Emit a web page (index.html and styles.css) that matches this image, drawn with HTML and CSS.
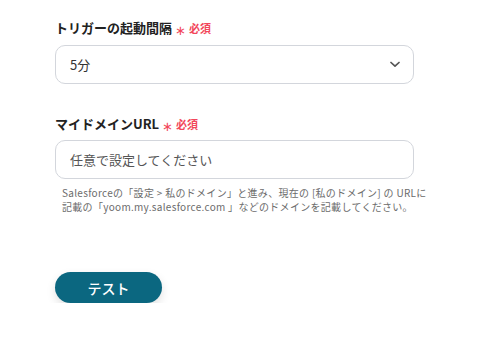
FILE: index.html
```html
<!DOCTYPE html>
<html lang="ja">
<head>
<meta charset="utf-8">
<link rel="stylesheet" href="styles.css">
</head>
<body>
<main class="form">
  <div class="field">
    <div class="label">トリガーの起動間隔<span class="req"><span class="ast">∗</span>必須</span></div>
    <div class="select">
      <span class="value">5分</span>
      <svg class="chev" width="10" height="7" viewBox="0 0 10 7"><path d="M1 1.5 L5 5.2 L9 1.5" fill="none" stroke="#555" stroke-width="1.7" stroke-linecap="round" stroke-linejoin="round"/></svg>
    </div>
  </div>
  <div class="field field2">
    <div class="label">マイドメインURL<span class="req"><span class="ast">∗</span>必須</span></div>
    <div class="input"><span class="placeholder">任意で設定してください</span></div>
    <p class="help">Salesforceの「設定 &gt; 私のドメイン」と進み、現在の [私のドメイン] の URLに<br>記載の「yoom.my.salesforce.com 」などのドメインを記載してください。</p>
  </div>
  <div class="actions">
    <button class="btn">テスト</button>
  </div>
</main>
</body>
</html>
```
FILE: styles.css
```css
html, body {
  margin: 0;
  padding: 0;
  background: #fff;
}
body {
  font-family: "Noto Sans CJK JP", "Noto Sans", sans-serif;
  color: #222;
}
.form {
  width: 359px;
  margin-left: 55px;
  padding-top: 18px;
}
.label {
  font-size: 13px;
  font-weight: 700;
  line-height: 20px;
  color: #222;
  display: flex;
  align-items: center;
}
.req {
  color: #f2485b;
  font-size: 11px;
  font-weight: 700;
  margin-left: 3px;
  display: flex;
  align-items: center;
}
.ast {
  font-size: 13px;
  font-weight: 400;
  margin-right: 3px;
  line-height: 1;
  position: relative;
  top: 1px;
}
.select, .input {
  box-sizing: border-box;
  height: 39px;
  border: 1px solid #d3d6dc;
  border-radius: 10px;
  margin-top: 7px;
  display: flex;
  align-items: center;
  padding: 0 13px 0 14px;
  font-size: 13px;
}
.select {
  justify-content: space-between;
}
.value { color: #333; }
.field2 { margin-top: 30px; }
.input { margin-top: 6px; }
.placeholder { color: #555; }
.help {
  margin: 7px 0 0 7px;
  font-size: 10px;
  line-height: 14px;
  letter-spacing: 0.3px;
  color: #6b6b6b;
  white-space: nowrap;
}
.actions {
  margin-top: 58px;
}
.btn {
  width: 107px;
  height: 31px;
  border: none;
  border-radius: 16px;
  background: #0b6780;
  color: #fff;
  font-family: "Noto Sans CJK JP", sans-serif;
  font-size: 14px;
  font-weight: 500;
  box-shadow: 0 4px 10px rgba(0, 0, 0, 0.12);
  padding: 0;
}
```
